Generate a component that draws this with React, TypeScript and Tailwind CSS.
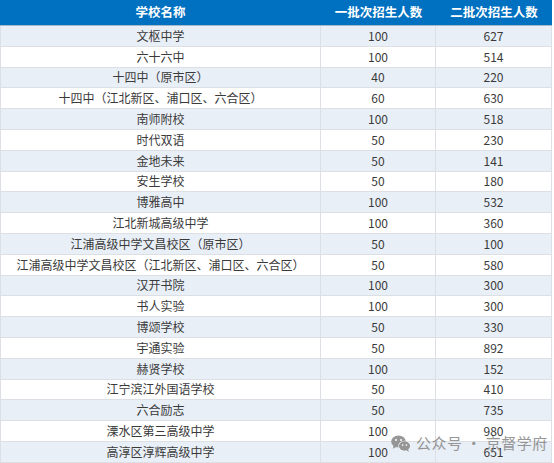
import React from "react";

const rows: [string, string, string][] = [
  ["文枢中学", "100", "627"],
  ["六十六中", "100", "514"],
  ["十四中（原市区）", "40", "220"],
  ["十四中（江北新区、浦口区、六合区）", "60", "630"],
  ["南师附校", "100", "518"],
  ["时代双语", "50", "230"],
  ["金地未来", "50", "141"],
  ["安生学校", "50", "180"],
  ["博雅高中", "100", "532"],
  ["江北新城高级中学", "100", "360"],
  ["江浦高级中学文昌校区（原市区）", "50", "100"],
  ["江浦高级中学文昌校区（江北新区、浦口区、六合区）", "50", "580"],
  ["汉开书院", "100", "300"],
  ["书人实验", "100", "300"],
  ["博颂学校", "50", "330"],
  ["宇通实验", "50", "892"],
  ["赫贤学校", "100", "152"],
  ["江宁滨江外国语学校", "50", "410"],
  ["六合励志", "50", "735"],
  ["溧水区第三高级中学", "100", "980"],
  ["高淳区淳辉高级中学", "100", "651"],
];

function WeChatIcon() {
  return (
    <svg width="20" height="17" viewBox="0 0 20 17">
      <ellipse cx="7.5" cy="6.5" rx="7.3" ry="6" fill="#8c8c8c" />
      <path d="M2.5 10.5 L2 13.8 L5.5 11.8 Z" fill="#8c8c8c" />
      <circle cx="5" cy="5" r="1" fill="#fff" />
      <circle cx="10" cy="5" r="1" fill="#fff" />
      <ellipse cx="13.5" cy="11" rx="6.2" ry="5.2" fill="#fff" />
      <ellipse cx="13.5" cy="11" rx="5.6" ry="4.7" fill="#8c8c8c" />
      <path d="M17 14.5 L18.2 16.8 L15 15.3 Z" fill="#8c8c8c" />
      <circle cx="11.6" cy="10" r="0.85" fill="#fff" />
      <circle cx="15.4" cy="10" r="0.85" fill="#fff" />
    </svg>
  );
}

export default function App() {
  return (
    <div
      className="relative w-[554px] h-[463px] overflow-hidden bg-white text-[12px] text-[#3a3a3a]"
      style={{ fontFamily: '"Noto Sans CJK SC", "Noto Sans", sans-serif' }}
    >
      <div className="w-[552px]">
        <div className="grid grid-cols-[321px_115px_116px] h-[26px] bg-[#0070c0] border-b border-[#a9b9cc] text-white font-bold text-[12.5px]">
          <div className="flex items-center justify-center">学校名称</div>
          <div className="flex items-center justify-center">一批次招生人数</div>
          <div className="flex items-center justify-center">二批次招生人数</div>
        </div>
        {rows.map(([name, a, b], i) => (
          <div
            key={i}
            className={
              "grid grid-cols-[320px_115px_115px] h-[20.8px] border-b border-l border-r border-[#dcdfe4] " +
              (i % 2 === 0 ? "bg-[#e9eff7]" : "bg-white")
            }
          >
            <div className="flex items-center justify-center border-r border-[#dcdfe4] whitespace-nowrap">{name}</div>
            <div className="flex items-center justify-center border-r border-[#dcdfe4]">{a}</div>
            <div className="flex items-center justify-center">{b}</div>
          </div>
        ))}
      </div>
      <div className="absolute left-[391px] top-[432px] flex items-center gap-[5px] text-[15px] text-[#8c8c8c] opacity-90">
        <WeChatIcon />
        <span className="tracking-[0.5px]">公众号 · 京督学府</span>
      </div>
    </div>
  );
}
